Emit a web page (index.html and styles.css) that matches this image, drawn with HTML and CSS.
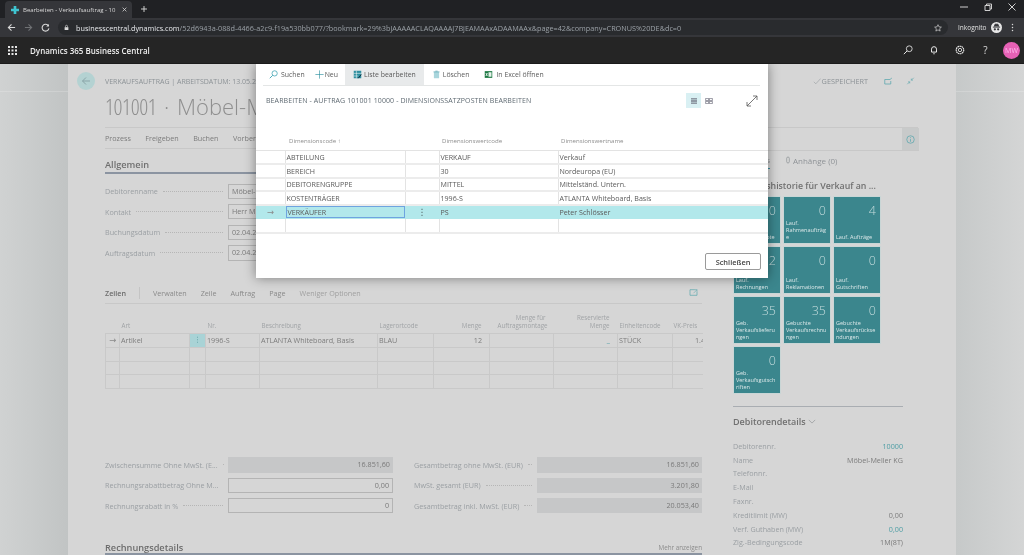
FILE: index.html
```html
<!DOCTYPE html>
<html lang="de">
<head>
<meta charset="utf-8">
<title>Bearbeiten - Verkaufsauftrag</title>
<link rel="stylesheet" href="styles.css">
</head>
<body>
<div class="tabbar">
  <div class="tab">
    <svg class="tab-logo" viewBox="0 0 12 12"><path d="M4 0h4v4h4v4H8v4H4V8H0V4h4z" fill="#3fc4d0"/></svg>
    <span class="tab-title">Bearbeiten - Verkaufsauftrag - 10</span>
    <svg class="tab-x" viewBox="0 0 8 8"><path d="M1 1l6 6M7 1L1 7" stroke="#dcdcdc" stroke-width="1.2"/></svg>
  </div>
  <svg class="tab-plus" viewBox="0 0 8 8"><path d="M4 0v8M0 4h8" stroke="#dcdcdc" stroke-width="1.2"/></svg>
  <div class="win-btns">
    <svg viewBox="0 0 10 10"><path d="M1 5h8" stroke="#cfcfcf"/></svg>
    <svg viewBox="0 0 10 10"><path d="M2 3.500h5v5H2zM3.500 3.500V2h5v5H7" fill="none" stroke="#cfcfcf"/></svg>
    <svg viewBox="0 0 10 10"><path d="M1.500 1.500l7 7M8.500 1.500l-7 7" stroke="#cfcfcf"/></svg>
  </div>
</div>
<div class="toolbar">
  <svg class="nav" viewBox="0 0 10 10"><path d="M9 5H1.500M5 1.500L1.500 5 5 8.500" fill="none" stroke="#d8d8d8" stroke-width="1.2"/></svg>
  <svg class="nav" viewBox="0 0 10 10"><path d="M1 5h7.500M5 1.500L8.500 5 5 8.500" fill="none" stroke="#6f7174" stroke-width="1.2"/></svg>
  <svg class="nav" viewBox="0 0 10 10"><path d="M8.300 3.200A3.800 3.800 0 1 0 8.800 6" fill="none" stroke="#d8d8d8" stroke-width="1.2"/><path d="M8.800 1v3h-3z" fill="#d8d8d8"/></svg>
  <div class="omnibox">
    <svg class="lock" viewBox="0 0 8 10"><path d="M1 4.500h6V9H1z" fill="#d8d8d8"/><path d="M2.400 4.500V3a1.600 1.600 0 0 1 3.200 0v1.500" fill="none" stroke="#d8d8d8"/></svg>
    <span class="url"><b>businesscentral.dynamics.com</b>/52d6943a-088d-4466-a2c9-f19a530bb077/?bookmark=29%3bJAAAAACLAQAAAAJ7BjEAMAAxADAAMAAx&amp;page=42&amp;company=CRONUS%20DE&amp;dc=0</span>
    <svg class="star" viewBox="0 0 12 12"><path d="M6 1l1.500 3.300 3.600.4-2.700 2.400.8 3.500L6 8.800l-3.200 1.800.8-3.500L.9 4.700l3.600-.4z" fill="none" stroke="#d8d8d8"/></svg>
  </div>
  <span class="incognito">Inkognito</span>
  <svg class="inc-icon" viewBox="0 0 12 12"><circle cx="6" cy="6" r="6" fill="#e8e8e8"/><path d="M2 5.600h8M3.600 5l.8-2.600h3.200L8.400 5" stroke="#35363a" fill="#35363a"/><circle cx="4.200" cy="8" r="1.200" fill="#35363a"/><circle cx="7.800" cy="8" r="1.200" fill="#35363a"/></svg>
  <svg class="dots" viewBox="0 0 4 12"><circle cx="2" cy="2" r="1" fill="#d8d8d8"/><circle cx="2" cy="6" r="1" fill="#d8d8d8"/><circle cx="2" cy="10" r="1" fill="#d8d8d8"/></svg>
</div>
<header class="suite">
  <svg class="waffle" viewBox="0 0 9 9"><g fill="#e8e8e8"><rect width="2" height="2"/><rect x="3.500" width="2" height="2"/><rect x="7" width="2" height="2"/><rect y="3.500" width="2" height="2"/><rect x="3.500" y="3.500" width="2" height="2"/><rect x="7" y="3.500" width="2" height="2"/><rect y="7" width="2" height="2"/><rect x="3.500" y="7" width="2" height="2"/><rect x="7" y="7" width="2" height="2"/></g></svg>
  <span class="brand">Dynamics 365 Business Central</span>
  <div class="suite-icons">
    <svg viewBox="0 0 12 12"><circle cx="7.500" cy="4.500" r="3.500" fill="none" stroke="#e8e8e8"/><path d="M5 7l-4 4" stroke="#e8e8e8" stroke-width="1.200"/></svg>
    <svg viewBox="0 0 12 12"><path d="M3 8.500V5a3 3 0 0 1 6 0v3.500z" fill="none" stroke="#e8e8e8" stroke-width="1.200"/><path d="M5 10.500h2" stroke="#e8e8e8"/></svg>
    <svg viewBox="0 0 12 12"><circle cx="6" cy="6" r="4.500" fill="none" stroke="#e8e8e8" stroke-width="1.400" stroke-dasharray="2 .5"/><circle cx="6" cy="6" r="2" fill="none" stroke="#e8e8e8"/></svg>
    <span class="help">?</span>
    <span class="avatar">MW</span>
  </div>
</header>
<div class="stage">
  <main class="page">
    <div class="head">
      <div class="caption-row">
        <span class="back"><svg viewBox="0 0 10 10"><path d="M9 5H1.500M5 1.500L1.500 5 5 8.500" fill="none" stroke="#8aa5a8"/></svg></span>
        <span class="caption">VERKAUFSAUFTRAG | ARBEITSDATUM: 13.05.2020</span>
        <span class="saved"><svg viewBox="0 0 10 10"><path d="M1 6l2.500 2.500L9.500 2" fill="none" stroke="#9aa0a3" stroke-width=".8"/></svg>GESPEICHERT</span>
        <svg class="head-icon" viewBox="0 0 12 10"><path d="M8 3H1v6h8V5" fill="none" stroke="#5aa7ad"/><path d="M8 3l2.500-2" stroke="#5aa7ad"/></svg>
        <svg class="head-icon last" viewBox="0 0 10 10"><path d="M9 1L6 4M6 2v2h2M1 9l3-3M2 6h2v2" fill="none" stroke="#5aa7ad" stroke-width=".8"/></svg>
      </div>
      <h1 class="title"><span class="title-no">101001</span> · Möbel-Meller KG</h1>
    </div>
    <div class="columns">
      <div class="left">
        <nav class="actions"><span>Prozess</span><span>Freigeben</span><span>Buchen</span><span>Vorbereiten</span></nav>
        <h2 class="section">Allgemein</h2>
        <div class="fields">
          <div class="field"><span class="label">Debitorenname</span><span class="input">Möbel-Meller KG</span></div>
          <div class="field"><span class="label">Kontakt</span><span class="input">Herr Michael</span></div>
          <div class="field"><span class="label">Buchungsdatum</span><span class="input">02.04.2020</span></div>
          <div class="field"><span class="label">Auftragsdatum</span><span class="input">02.04.2020</span></div>
        </div>
        <div class="lines-bar">
          <strong>Zeilen</strong><i></i><span>Verwalten</span><span>Zeile</span><span>Auftrag</span><span>Page</span><span class="muted">Weniger Optionen</span>
          <svg viewBox="0 0 12 10"><path d="M8 1H1v8h10V4" fill="none" stroke="#5aa7ad"/><path d="M6 6l5-5M8 1h3v3" fill="none" stroke="#5aa7ad" stroke-width=".8"/></svg>
        </div>
        <table class="lines">
          <colgroup><col class="c1"><col class="c2"><col class="c3"><col class="c4"><col class="c5"><col class="c6"><col class="c7"><col class="c8"><col class="c9"><col class="c10"><col class="c11"></colgroup>
          <thead><tr><th></th><th>Art</th><th></th><th>Nr.</th><th>Beschreibung</th><th>Lagerortcode</th><th class="r">Menge</th><th class="r">Menge für Auftragsmontage</th><th class="r">Reservierte Menge</th><th>Einheitencode</th><th class="clip">VK-Preis</th></tr></thead>
          <tbody>
            <tr><td class="arrow">→</td><td>Artikel</td><td class="kebab">⋮</td><td>1996-S</td><td>ATLANTA Whiteboard, Basis</td><td>BLAU</td><td class="r">12</td><td></td><td class="r teal">_</td><td>STÜCK</td><td class="clip price">1.404,00</td></tr>
            <tr><td></td><td></td><td></td><td></td><td></td><td></td><td></td><td></td><td></td><td></td><td class="clip"></td></tr>
            <tr><td></td><td></td><td></td><td></td><td></td><td></td><td></td><td></td><td></td><td></td><td class="clip"></td></tr>
            <tr><td></td><td></td><td></td><td></td><td></td><td></td><td></td><td></td><td></td><td></td><td class="clip"></td></tr>
          </tbody>
        </table>
        <div class="totals">
          <div class="tot-col">
            <div class="field"><span class="label">Zwischensumme Ohne MwSt. (E...</span><span class="input ro">16.851,60</span></div>
            <div class="field"><span class="label">Rechnungsrabattbetrag Ohne M...</span><span class="input num">0,00</span></div>
            <div class="field"><span class="label">Rechnungsrabatt in %</span><span class="input num">0</span></div>
          </div>
          <div class="tot-col">
            <div class="field"><span class="label">Gesamtbetrag ohne MwSt. (EUR)</span><span class="input ro">16.851,60</span></div>
            <div class="field"><span class="label">MwSt. gesamt (EUR)</span><span class="input ro">3.201,80</span></div>
            <div class="field"><span class="label">Gesamtbetrag inkl. MwSt. (EUR)</span><span class="input ro">20.053,40</span></div>
          </div>
        </div>
        <div class="section foot"><span>Rechnungsdetails</span><em>Mehr anzeigen</em></div>
      </div>
      <aside class="right">
        <div class="info-row"><span class="info"><svg viewBox="0 0 12 12"><circle cx="6" cy="6" r="5" fill="none" stroke="#5aa7ad"/><path d="M6 5.500V9M6 3v1.200" stroke="#5aa7ad"/></svg></span></div>
        <div class="fb-tabs"><span class="fb-active">Details</span><span class="attach"><svg viewBox="0 0 6 10"><rect x="1" y=".5" width="4" height="9" rx="2" fill="none" stroke="#8a8f92"/></svg>Anhänge (0)</span></div>
        <h3 class="fb-title">Verkaufshistorie für Verkauf an ...</h3>
        <div class="tiles">
          <div class="tile"><b>0</b><span>Lauf. Angebote</span></div>
          <div class="tile"><b>0</b><span>Lauf. Rahmenaufträg<wbr>e</span></div>
          <div class="tile"><b>4</b><span>Lauf. Aufträge</span></div>
          <div class="tile"><b>2</b><span>Lauf. Rechnungen</span></div>
          <div class="tile"><b>0</b><span>Lauf. Reklamationen</span></div>
          <div class="tile"><b>0</b><span>Lauf. Gutschriften</span></div>
          <div class="tile"><b>35</b><span>Geb. Verkaufslieferu<wbr>ngen</span></div>
          <div class="tile"><b>35</b><span>Gebuchte Verkaufsrechnu<wbr>ngen</span></div>
          <div class="tile"><b>0</b><span>Gebuchte Verkaufsrückse<wbr>ndungen</span></div>
          <div class="tile"><b>0</b><span>Geb. Verkaufsgutsch<wbr>riften</span></div>
        </div>
        <h3 class="fb-details">Debitorendetails <svg viewBox="0 0 10 6"><path d="M1 1l4 4 4-4" fill="none" stroke="#8a8f92" stroke-width=".8"/></svg></h3>
        <dl class="details">
          <div><dt>Debitorennr.</dt><dd class="teal">10000</dd></div>
          <div><dt>Name</dt><dd>Möbel-Meller KG</dd></div>
          <div><dt>Telefonnr.</dt><dd></dd></div>
          <div><dt>E-Mail</dt><dd></dd></div>
          <div><dt>Faxnr.</dt><dd></dd></div>
          <div><dt>Kreditlimit (MW)</dt><dd>0,00</dd></div>
          <div><dt>Verf. Guthaben (MW)</dt><dd class="teal">0,00</dd></div>
          <div><dt>Zlg.-Bedingungscode</dt><dd>1M(8T)</dd></div>
        </dl>
      </aside>
    </div>
  </main>

  <section class="modal">
    <div class="cmdbar">
      <span class="cmd c-search"><svg viewBox="0 0 12 12"><circle cx="7.500" cy="4.500" r="3.500" fill="none" stroke="#3aa0b0"/><path d="M5 7l-4 4" stroke="#3aa0b0" stroke-width="1.200"/></svg>Suchen</span>
      <span class="cmd c-new"><svg viewBox="0 0 12 12"><path d="M6 .5v11M.5 6h11" stroke="#1f8a9a" stroke-width=".8"/></svg>Neu</span>
      <span class="cmd active"><svg viewBox="0 0 12 12"><path d="M1 1h10v10H1z" fill="#2f8f9f"/><path d="M1 4.500h10M1 8h6M4.500 1v10" stroke="#fff" stroke-width=".7"/><path d="M7 11l4-5" stroke="#123" stroke-width="1.200"/></svg>Liste bearbeiten</span>
      <span class="cmd c-del"><svg viewBox="0 0 10 12"><path d="M1.500 2.500h7V11h-7z" fill="#a9d5dc"/><path d="M1 2.500h8M3.500 1.500h3" stroke="#5fa9b5"/></svg>Löschen</span>
      <span class="cmd c-xl"><svg viewBox="0 0 12 12"><rect x="1" y="1.500" width="10" height="9" fill="#1f7a45"/><rect x="6" y="3" width="4" height="6" fill="#e8f3ec"/><path d="M2.500 4l2 4M4.500 4l-2 4" stroke="#fff"/></svg>In Excel öffnen</span>
    </div>
    <div class="modal-title">
      <h2>BEARBEITEN - AUFTRAG 101001 10000 - DIMENSIONSSATZPOSTEN BEARBEITEN</h2>
      <span class="view on"><svg viewBox="0 0 10 8"><path d="M1 1h8M1 3h8M1 5h8M1 7h8" stroke="#556"/></svg></span>
      <span class="view"><svg viewBox="0 0 10 8"><path d="M.5 .5h4v3h-4zM5.500 .5h4v3h-4zM.5 4.500h4v3h-4zM5.500 4.500h4v3h-4z" fill="none" stroke="#556" stroke-width=".8"/></svg></span>
      <svg class="expand" viewBox="0 0 12 12"><path d="M1 11L11 1M7 1h4v4M1 7v4h4" fill="none" stroke="#555" stroke-width=".8"/></svg>
    </div>
    <table class="dims">
      <colgroup><col class="d1"><col class="d2"><col class="d3"><col class="d4"><col class="d5"></colgroup>
      <thead><tr><th></th><th>Dimensionscode ↑</th><th></th><th>Dimensionswertcode</th><th>Dimensionswertname</th></tr></thead>
      <tbody>
        <tr><td></td><td>ABTEILUNG</td><td></td><td>VERKAUF</td><td>Verkauf</td></tr>
        <tr><td></td><td>BEREICH</td><td></td><td>30</td><td>Nordeuropa (EU)</td></tr>
        <tr><td></td><td>DEBITORENGRUPPE</td><td></td><td>MITTEL</td><td>Mittelständ. Untern.</td></tr>
        <tr><td></td><td>KOSTENTRÄGER</td><td></td><td>1996-S</td><td>ATLANTA Whiteboard, Basis</td></tr>
        <tr class="sel"><td class="arrow">→</td><td class="focus">VERKÄUFER</td><td class="kebab">⋮</td><td>PS</td><td>Peter Schlösser</td></tr>
        <tr><td></td><td></td><td></td><td></td><td></td></tr>
      </tbody>
    </table>
    <div class="modal-foot"><button class="close">Schließen</button></div>
  </section>
</div>
</body>
</html>
```
FILE: styles.css
```css
* { box-sizing: border-box; }
html, body { margin: 0; height: 100%; }
body {
  width: 1024px; height: 555px; overflow: hidden;
  display: flex; flex-direction: column;
  font-family: "Open Sans", "Noto Sans", sans-serif;
  background: #d6d6d6; color: #707070;
}
body > * { filter: blur(.3px); }
svg { display: block; flex: none; }

/* Browser chrome */
.tabbar { height: 18px; flex: none; background: #202124; display: flex; align-items: flex-end; padding-left: 5px; }
.tab { width: 127px; height: 17px; background: #35363a; border-radius: 4px 4px 0 0; display: flex; align-items: center; padding: 0 5px 0 6px; color: #d8d8d8; font-size: 6px; }
.tab-logo { width: 8px; height: 8px; margin-right: 4px; }
.tab-title { flex: 1; overflow: hidden; white-space: nowrap; }
.tab-x { width: 5px; height: 5px; margin-left: 3px; }
.tab-plus { width: 6px; height: 6px; margin: 0 0 6px 9px; }
.win-btns { margin-left: auto; display: flex; gap: 14px; padding: 0 7px 6px 0; }
.win-btns svg { width: 10px; height: 10px; }
.toolbar { height: 19px; flex: none; background: #35363a; display: flex; align-items: center; padding-left: 7px; }
.nav { width: 9px; height: 9px; margin-right: 8px; }
.omnibox { width: 890px; height: 15px; background: #292b2e; border-radius: 8px; display: flex; align-items: center; padding: 0 6px 0 6px; }
.lock { width: 5px; height: 7px; margin-right: 7px; }
.url { flex: 1; font-size: 7.270px; color: #9aa0a6; white-space: nowrap; overflow: hidden; }
.url b { font-weight: 400; color: #e8eaed; }
.star { width: 8px; height: 8px; }
.incognito { margin-left: 10px; font-size: 6.500px; color: #e0e0e0; }
.inc-icon { width: 11px; height: 11px; margin-left: 4px; }
.dots { width: 3px; height: 9px; margin-left: 9px; }
.suite { height: 27px; flex: none; background: #252525; display: flex; align-items: center; padding-left: 8px; border-bottom: 1px solid #1b1b1b; }
.waffle { width: 9px; height: 9px; margin-right: 13px; }
.brand { color: #eee; font-size: 8px; font-weight: 600; }
.suite-icons { margin-left: auto; display: flex; align-items: center; gap: 16px; padding-right: 4px; }
.suite-icons svg { width: 10px; height: 10px; }
.help { color: #ddd; font-size: 10px; width: 9px; text-align: center; }
.avatar { width: 17px; height: 17px; margin-left: -3px; border-radius: 50%; background: #e661b5; color: #fbe; font-size: 7px; display: flex; align-items: center; justify-content: center; }

/* Stage */
.stage { flex: 1; position: relative; overflow: hidden; background: linear-gradient(transparent 27px, rgba(255, 255, 255, .18) 27px, rgba(255, 255, 255, .18) 28px, transparent 28px), linear-gradient(90deg, #d0d2d2 0, #c1c4c4 68px, #c6c9c9 956px, #d4d5d5 1024px); }
.page { width: 888px; height: 600px; margin-left: 68px; padding: 0 38px 0 37px; background: #d6d6d6; }
.head { height: 64px; border-bottom: 1px solid #c8c8c8; }
.caption-row { height: 34px; display: flex; align-items: center; position: relative; font-size: 7px; color: #8c9296; }
.back { position: absolute; left: -28px; top: 8px; width: 18px; height: 18px; border-radius: 50%; background: #b4d2d2; display: flex; align-items: center; justify-content: center; }
.back svg { width: 10px; height: 10px; }
.saved { margin-left: auto; display: flex; align-items: center; gap: 1px; font-size: 7.300px; margin-right: 16px; }
.saved svg { width: 8px; height: 8px; }
.head-icon { width: 9px; height: 8px; margin-right: 13px; }
.head-icon.last { margin-right: 3px; }
.title { margin: 0; font-size: 22px; font-weight: 300; font-stretch: 90%; word-spacing: 2px; color: #8f8f8f; line-height: 16px; white-space: nowrap; }
.title-no { font-stretch: 75%; letter-spacing: -.4px; }
.columns { display: grid; grid-template-columns: 597px 186px; column-gap: 31px; width: 814px; }
.left { width: 597px; }
.actions { height: 21px; display: flex; gap: 14.500px; align-items: center; font-size: 7.200px; border-bottom: 1px solid #c8c8c8; color: #7c7c7c; }
.section { margin: 0; font-size: 9.200px; font-weight: 600; color: #707070; height: 25px; line-height: 31px; border-bottom: 2px solid #8b94a1; }
.fields { padding-top: 9.500px; display: flex; flex-direction: column; gap: 5.300px; width: 597px; }
.field { display: flex; height: 15.300px; align-items: center; }
.label { width: 123px; flex: none; display: flex; align-items: center; font-size: 7.200px; color: #9a9fa3; white-space: nowrap; overflow: hidden; padding-right: 5px; }
.label::after { content: ""; flex: 1; min-width: 0; margin-left: 5px; border-bottom: 1px dotted #b6b6b6; }
.input { flex: 1; height: 100%; border: 1px solid #b4b4b4; font-size: 7.200px; line-height: 13px; padding: 0 3px; color: #7a7a7a; }
.num { text-align: right; }
.ro { background: #c6c7c8; border: 0; text-align: right; line-height: 15px; padding-right: 3px; }
.lines-bar { margin-top: 22px; height: 21px; display: flex; align-items: center; gap: 14px; font-size: 7.200px; border-bottom: 1px solid #c8c8c8; color: #8a8a8a; }
.lines-bar strong { font-weight: 600; color: #6c6c6c; margin-right: -1px; }
.lines-bar i { width: 1px; height: 12px; background: #c4c4c4; margin-right: -1px; }
.lines-bar .muted { color: #a0a0a0; }
.lines-bar svg { width: 9px; height: 7px; margin-left: auto; margin-right: 4px; }
table { border-collapse: collapse; table-layout: fixed; }
.lines { width: 597px; font-size: 7.200px; }
.c1 { width: 14px; } .c2 { width: 70px; } .c3 { width: 16px; } .c4 { width: 54px; } .c5 { width: 118px; } .c6 { width: 56px; } .c7 { width: 56px; } .c8 { width: 64px; } .c9 { width: 64px; } .c10 { width: 55px; } .c11 { width: 30px; }
.lines th { height: 30px; font-weight: 400; font-size: 6.200px; line-height: 8px; color: #a0a3a6; text-align: left; vertical-align: bottom; padding: 0 2px 3px; white-space: normal; }
.lines td { height: 13.800px; padding: 0 1px; border: 1px solid #c9c9c9; white-space: nowrap; color: #7c7c7c; line-height: 10px; }
.lines th.r { text-align: right; padding-right: 8px; padding-left: 8px; }
.lines td.r { text-align: right; padding-right: 7px; }
.lines .clip { overflow: hidden; border-right: 0; white-space: nowrap; }
.lines th.clip { padding-left: 1px; padding-right: 0; }
.lines .price { padding-left: 22px; }
.lines .arrow, .dims .arrow { text-align: center; font-family: "DejaVu Sans", sans-serif; font-size: 8.500px; color: #8a8a8a; }
.lines .kebab { background: #a9d3d6; text-align: center; color: #5f9da2; font-family: "DejaVu Sans", sans-serif; }
.teal { color: #4f9ea5 !important; }
.totals { margin-top: 68px; display: grid; grid-template-columns: 288px 288px; column-gap: 21px; }
.tot-col { display: flex; flex-direction: column; gap: 5px; }
.foot { margin-top: 27px; display: flex; justify-content: space-between; height: 15px; line-height: 16px; color: #6c6c6c; }
.foot em { font-style: normal; font-weight: 400; font-size: 6.300px; color: #8c8c8c; }

/* Factbox */
.right { width: 186px; font-size: 7.200px; }
.info-row { height: 23px; display: flex; justify-content: flex-end; border-bottom: 1px solid #c8c8c8; }
.info { width: 17px; background: #c8caca; display: flex; align-items: center; justify-content: center; }
.info svg { width: 9px; height: 9px; }
.fb-tabs { height: 18px; display: flex; align-items: center; gap: 16px; font-size: 8px; color: #8f9397; width: 170px; }
.fb-active { border-bottom: 1px solid #3f8fa0; width: 37px; height: 100%; line-height: 18px; text-align: right; overflow: hidden; }
.attach { display: flex; align-items: center; gap: 3px; }
.attach svg { width: 4px; height: 8px; }
.fb-title { margin: 0; width: 170px; height: 27px; padding-top: 10px; line-height: 14px; font-size: 8.800px; font-weight: 600; color: #707070; white-space: nowrap; overflow: hidden; }
.tiles { display: grid; grid-template-columns: repeat(3, 48px); grid-auto-rows: 48px; gap: 2px; width: 170px; padding-bottom: 12px; border-bottom: 1px solid #a9adb2; }
.tile { background: #3b868d; color: #dbe8e9; position: relative; display: flex; flex-direction: column; justify-content: flex-end; padding: 3px; font-size: 5.500px; line-height: 7px; outline: 1px solid #c9d6d6; outline-offset: -1px; }
.tile b { position: absolute; right: 5px; top: 7px; font-weight: 300; font-size: 12.500px; line-height: 16px; color: #c4dcdd; }
.fb-details { margin: 0; height: 28px; width: 170px; display: flex; align-items: center; gap: 2px; font-size: 9px; font-weight: 600; color: #707070; }
.fb-details svg { width: 8px; height: 5px; }
.details { margin: 4px 0 0; width: 170px; font-size: 7.200px; }
.details div { display: flex; justify-content: space-between; height: 13.800px; align-items: center; }
.details dt { color: #9a9fa3; }
.details dd { margin: 0; color: #7c7c7c; }

/* Modal */
.modal { position: absolute; left: 256px; top: 0; width: 512px; height: 214px; background: #fff; box-shadow: 0 0 11px rgba(0, 0, 0, .42); display: flex; flex-direction: column; color: #555; }
.cmdbar { height: 22px; margin: 0 8px 0 7px; display: flex; align-items: stretch; border-bottom: 1px solid #e4e6e6; font-size: 6.900px; color: #5a5a5a; }
.cmd { display: flex; align-items: center; gap: 3px; white-space: nowrap; }
.cmd svg { width: 9px; height: 9px; }
.c-search { padding: 0 6px; }
.c-new { padding: 0 7px 0 4px; gap: 1px; }
.cmd.active { background: #e8eaeb; padding: 0 8px; gap: 2px; }
.c-del { padding: 0 7px 0 8px; gap: 2px; }
.c-xl { padding: 0 0 0 8px; }
.modal-title { height: 29px; display: flex; align-items: center; padding: 0 10px; }
.modal-title h2 { margin: 0; flex: 1; font-size: 7px; letter-spacing: .1px; font-weight: 400; color: #5f6a72; white-space: nowrap; }
.view { width: 15px; height: 15px; display: flex; align-items: center; justify-content: center; }
.view.on { background: #d9f0f3; }
.view svg { width: 8px; height: 6px; }
.expand { width: 12px; height: 12px; margin-left: 30px; }
.dims { width: 512px; font-size: 7.100px; }
.d1 { width: 29px; } .d2 { width: 120px; } .d3 { width: 34px; } .d4 { width: 119px; } .d5 { width: 210px; }
.dims th { height: 35px; padding: 17px 3px 0; font-weight: 400; font-size: 6.100px; color: #8d8d8d; text-align: left; }
.dims th:nth-child(2) { padding-left: 4px; }
.dims td { height: 13.800px; padding: 0 1px; border: 1px solid #e3e3e3; border-bottom: 2px solid #ececec; white-space: nowrap; color: #5a5a5a; line-height: 10px; }
.dims td:first-child { border-left: 0; }
.dims td:last-child { border-right: 0; }
.dims .sel td { background: #b2e8eb; border-color: #b2e8eb; border-bottom-width: 1px; }
.dims .sel .focus { box-shadow: inset 0 0 0 1px #6ea4e0; padding-left: 2px; }
.dims .kebab { text-align: center; color: #566; font-size: 9px; font-family: "DejaVu Sans", sans-serif; }
.modal-foot { flex: 1; display: flex; justify-content: flex-end; align-items: flex-end; padding: 0 7px 8px 0; }
.close { width: 56px; height: 17px; background: #fff; border: 1px solid #9a9a9a; border-radius: 2px; padding: 0; font: 600 7.400px "Open Sans", sans-serif; color: #444; }
```
